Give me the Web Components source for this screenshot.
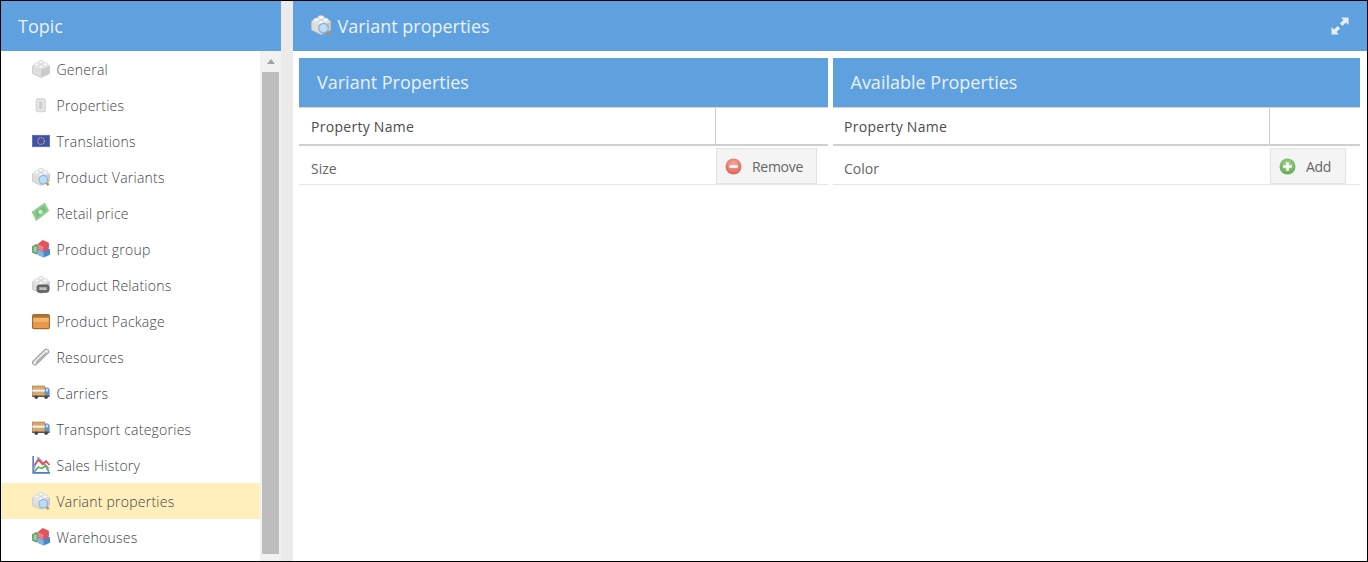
<!DOCTYPE html>
<html>
<head>
<meta charset="utf-8">
<title>Variant properties</title>
<style>
html, body { margin: 0; padding: 0; height: 562px; overflow: hidden; }
body { background: #000; font-family: "Open Sans", "Liberation Sans", sans-serif; color: #555; }
</style>
</head>
<body>

<admin-page>
    <topic-panel slot="side" heading="Topic">
        <topic-item icon="brick">General</topic-item>
        <topic-item icon="can">Properties</topic-item>
        <topic-item icon="flag">Translations</topic-item>
        <topic-item icon="brickfind">Product Variants</topic-item>
        <topic-item icon="money">Retail price</topic-item>
        <topic-item icon="group">Product group</topic-item>
        <topic-item icon="bricklink">Product Relations</topic-item>
        <topic-item icon="box">Product Package</topic-item>
        <topic-item icon="clip">Resources</topic-item>
        <topic-item icon="truck">Carriers</topic-item>
        <topic-item icon="truck">Transport categories</topic-item>
        <topic-item icon="chart">Sales History</topic-item>
        <topic-item icon="brickfind" active>Variant properties</topic-item>
        <topic-item icon="group">Warehouses</topic-item>
    </topic-panel>

    <main-panel slot="main" heading="Variant properties" icon="brickfind">
        <prop-table heading="Variant Properties" class="left">
            <prop-row name="Size" action="Remove"></prop-row>
        </prop-table>
        <prop-table heading="Available Properties" class="right">
            <prop-row name="Color" action="Add" class="right"></prop-row>
        </prop-table>
    </main-panel>
</admin-page>

<script>
// all the little icons, coloured like the old silk set (16 unit box)
const ICONS = {
    brick: `<path d="M.5 5 8 2l7.500 3v7L8 15.500.5 12z" fill="#dedede" stroke="#c4c4c4" stroke-width=".7"/>
        <path d="M8 8.500v7l7.500-3.500V5z" fill="#cbcbcb"/>
        <path d="M.5 5 8 2l7.500 3L8 8.500z" fill="#efefef"/>
        <ellipse cx="4.500" cy="4" rx="2.500" ry="1.600" fill="#f8f8f8" stroke="#c8c8c8" stroke-width=".6"/>
        <ellipse cx="11.500" cy="4" rx="2.500" ry="1.600" fill="#f8f8f8" stroke="#c8c8c8" stroke-width=".6"/>
        <ellipse cx="8" cy="2" rx="2.500" ry="1.600" fill="#f8f8f8" stroke="#c8c8c8" stroke-width=".6"/>
        <ellipse cx="8" cy="6" rx="2.500" ry="1.600" fill="#f8f8f8" stroke="#c8c8c8" stroke-width=".6"/>`,
    can: `<rect x="3.800" y="2.500" width="8" height="11.500" rx="2" fill="#e6e6e6" stroke="#d4d4d4"/><rect x="6.300" y="5" width="3" height="6.500" fill="#cfcfcf"/>`,
    flag: `<rect x=".3" y="2.900" width="15.400" height="10.200" fill="#3f51a8" stroke="#5a6ab0" stroke-width=".6"/>
        <circle cx="8" cy="8" r="3" fill="none" stroke="#c2b268" stroke-width="1.100" stroke-dasharray="1 .7"/>`,
    money: `<path d="M0 7 11.300-.8 15 6 3.800 14.800z" fill="#93d193" stroke="#7cbd80" stroke-width=".5"/>
        <path d="M2.300 7.300 10.700 1.600 12.800 5.700 4.300 12.300z" fill="#79c080"/><circle cx="7.500" cy="7" r="1.900" fill="#cdefcd"/>`,
    group: `<path d="M0 5.500 3.500 3.500 7 5v6.500l-3.500 1.300L0 11z" fill="#63a86b"/><path d="M1.500 6.500 4 5.500v5.500l-2.500-1z" fill="#a3d0a5"/>
        <path d="M5 8.500 10.500 6 16 8.500v4.500l-5.500 2.500L5 13z" fill="#4d86c4"/><path d="M5 8.500l5.500 2.500v4.500L5 13z" fill="#86b3e2"/>
        <path d="M5 3.500 9.500 0 15 2.500v5L10 10.500 5 8z" fill="#e2535b"/><path d="M5 3.500 10 5.800v4.700L5 8z" fill="#ef7f85"/>`,
    box: `<rect x=".5" y="2.300" width="15" height="12.500" rx="1.200" fill="#e89a4c" stroke="#a26b32"/>
        <rect x="1" y="2.600" width="14" height="2.400" fill="#a9713a"/><rect x="1.200" y="5.300" width="13.600" height="3.500" fill="#f3b46c"/>`,
    clip: `<path d="M2.500 13 12.800 3" stroke="#a2a2a2" stroke-width="5" stroke-linecap="round"/>
        <path d="M2.500 13 12.800 3" stroke="#ececec" stroke-width="3" stroke-linecap="round"/>
        <path d="M4 12.600 12.500 4.300" stroke="#a2a2a2" stroke-width="1" stroke-linecap="round"/>`,
    truck: `<rect x=".3" y="1.800" width="11" height="9" fill="#dca869" stroke="#a87b43" stroke-width=".6"/>
        <rect x=".3" y="5" width="11" height="1.800" fill="#eef2f7"/>
        <path d="M11.600 3.200h2.800l1.300 2v5.500h-4.100z" fill="#5d93d3"/><rect x="12.500" y="4.200" width="1.800" height="2.400" fill="#cfe2f7"/>
        <rect x=".3" y="10.300" width="15.400" height="1.300" fill="#555"/><circle cx="3.800" cy="11.800" r="1.500" fill="#444"/><circle cx="12.500" cy="11.800" r="1.500" fill="#444"/>`,
    chart: `<path d="M1 0v15h15" fill="none" stroke="#4c7fbe" stroke-width="1.400"/>
        <path d="M1.500 12 5.500 1.500 15 11" fill="none" stroke="#8ea2dc" stroke-width="1.300"/>
        <path d="M2 8 6 3.500 9.500 7.500l3-3 3 3.500" fill="none" stroke="#e2535b" stroke-width="1.600"/>
        <path d="M2 14 5.500 10 9 11 12 8.500l3 5.500" fill="none" stroke="#62ad62" stroke-width="1.600"/>`,
    lens: `<circle cx="10" cy="10.500" r="3.800" fill="#bcdcf6" stroke="#86aed2" stroke-width=".9"/><path d="M13 13.500 14.800 15.200" stroke="#c98a43" stroke-width="2.200"/>`,
    link: `<rect x="4.500" y="8" width="10.500" height="6.500" rx="2" fill="#6a6a6a" stroke="#4a4a4a" stroke-width=".7"/><rect x="6.500" y="10" width="6.500" height="2.500" fill="#bdbdbd"/>`
};
ICONS.brickfind = ICONS.brick + ICONS.lens;
ICONS.bricklink = ICONS.brick + ICONS.link;

class UiIcon extends HTMLElement
{
    connectedCallback()
    {
        let size = this.getAttribute('size') || 18;
        let shadow = this.attachShadow({mode: 'open'});
        shadow.innerHTML = `
            <style>
                :host { display: inline-flex; flex: none; width: ${size}px; height: ${size}px; }
                svg { width: 100%; height: 100%; display: block; overflow: visible; }
            </style>
            <svg viewBox="0 0 16 16">${ICONS[this.getAttribute('name')] || ''}</svg>`;
    }
}
customElements.define('ui-icon', UiIcon);


class AdminPage extends HTMLElement
{
    constructor()
    {
        super();
        this.attachShadow({mode: 'open'}).innerHTML = `
            <style>
                :host { display: flex; box-sizing: border-box; height: 562px; padding: 1px; background: #000; }
                .wrap { display: flex; flex: 1; min-width: 0; background: #ebebeb; }
                .side { display: flex; width: 280px; flex: none; }
                .main { display: flex; flex: 1; min-width: 0; margin-left: 12px; }
            </style>
            <div class="wrap">
                <div class="side"><slot name="side"></slot></div>
                <div class="main"><slot name="main"></slot></div>
            </div>`;
    }
}
customElements.define('admin-page', AdminPage);


class TopicPanel extends HTMLElement
{
    constructor()
    {
        super();
        this.attachShadow({mode: 'open'}).innerHTML = `
            <style>
                :host { display: flex; flex-direction: column; flex: 1; background: #fff; overflow: hidden; }
                header { height: 50px; flex: none; background: #5fa0de; color: #e9f2fb; font-size: 18px;
                    line-height: 50px; padding-left: 17px; }
                .body { display: flex; flex: 1; min-height: 0; }
                .list { flex: 1; min-width: 0; overflow: hidden; }
                .track { width: 21px; flex: none; background: #f1f1f1; padding: 0 2px 7px; box-sizing: border-box;
                    display: flex; flex-direction: column; }
                .arrow { height: 21px; flex: none; display: flex; justify-content: center; align-items: center; }
                .arrow i { width: 0; height: 0; border: 4.5px solid transparent; border-top: 0; border-bottom: 5px solid #a3a3a3; }
                .thumb { flex: 1; background: #bdbdbd; }
            </style>
            <header></header>
            <div class="body">
                <div class="list"><slot></slot></div>
                <div class="track"><div class="arrow"><i></i></div><div class="thumb"></div></div>
            </div>`;
        this.shadowRoot.querySelector('header').textContent = this.getAttribute('heading');
    }
}
customElements.define('topic-panel', TopicPanel);


class TopicItem extends HTMLElement
{
    connectedCallback()
    {
        let shadow = this.attachShadow({mode: 'open'});
        shadow.innerHTML = `
            <style>
                :host { display: flex; align-items: center; height: 36px; padding-left: 31px; font-size: 14px;
                    font-weight: 300; color: #444; letter-spacing: .24px; }
                :host([active]) { background: #ffefbb; }
                ui-icon { margin-right: 6.5px; }
            </style>
            <ui-icon name="${this.getAttribute('icon')}"></ui-icon><slot></slot>`;
    }
}
customElements.define('topic-item', TopicItem);


class MainPanel extends HTMLElement
{
    connectedCallback()
    {
        let shadow = this.attachShadow({mode: 'open'});
        shadow.innerHTML = `
            <style>
                :host { display: flex; flex-direction: column; flex: 1; min-width: 0; background: #fff; }
                header { height: 50px; flex: none; background: #5fa0de; color: #e9f2fb; font-size: 18px;
                    display: flex; align-items: center; padding: 0 18px; }
                header span { flex: 1; margin: -1px 0 0 6.5px; }
                header ui-icon { margin-top: -2px; }
                svg { width: 18px; height: 18px; display: block; }
                .body { display: grid; grid-template-columns: 529px 527px; column-gap: 5px; padding: 7px 0 0 6px; }
            </style>
            <header>
                <ui-icon name="${this.getAttribute('icon')}" size="20"></ui-icon>
                <span>${this.getAttribute('heading')}</span>
                <svg viewBox="0 0 18 18"><path d="M10 .5h7.500V8l-2.500-2.500-3.600 3.600-2.500-2.500 3.600-3.600zM8 17.500H.5V10L3 12.500l3.600-3.600 2.500 2.500-3.600 3.600z" fill="#e4eff9"/></svg>
            </header>
            <div class="body"><slot></slot></div>`;
    }
}
customElements.define('main-panel', MainPanel);


class PropTable extends HTMLElement
{
    connectedCallback()
    {
        let left = this.classList.contains('left');
        let shadow = this.attachShadow({mode: 'open'});
        shadow.innerHTML = `
            <style>
                :host { display: block; }
                h2 { margin: 0; height: 49px; background: #5fa0de; color: #e9f2fb; font-size: 18px; font-weight: 400;
                    line-height: 48px; padding-left: ${left ? 18 : 17.5}px; }
                .head { display: flex; height: 36px; border-top: 1px solid #d6d6d6; border-bottom: 2px solid #cfcfcf;
                    font-size: 14px; color: #4c4c4c; letter-spacing: .28px; }
                .head div:first-child { flex: 1; padding: 9px 0 0 ${left ? 12 : 11}px; }
                .head div:last-child { width: ${left ? 113 : 91}px; flex: none; border-left: 1px solid #cfcfcf; box-sizing: border-box; }
            </style>
            <h2>${this.getAttribute('heading')}</h2>
            <div class="head"><div>Property Name</div><div></div></div>
            <slot></slot>`;
    }
}
customElements.define('prop-table', PropTable);


class PropRow extends HTMLElement
{
    connectedCallback()
    {
        let remove = this.getAttribute('action') == 'Remove';
        let shadow = this.attachShadow({mode: 'open'});
        shadow.innerHTML = `
            <style>
                :host { display: flex; height: 39px; box-sizing: border-box; border-bottom: 1px solid #e6e6e6;
                    font-size: 14px; color: #666; }
                .name { flex: 1; padding: 13px 0 0 ${remove ? 12 : 11}px; }
                button { font: inherit; color: #666; margin: 2px ${remove ? 11 : 14}px 0 0; height: 36px; box-sizing: border-box;
                    width: ${remove ? 101 : 76}px; background: #f4f4f4; border: 1px solid #e2e2e2;
                    letter-spacing: -.3px; display: flex; align-items: center; padding: 0 0 0 8px; }
                svg { width: 17px; height: 17px; flex: none; margin-right: 10px; }
            </style>
            <div class="name">${this.getAttribute('name')}</div>
            <button>
                <svg viewBox="0 0 16 16">
                    <defs><radialGradient id="g" cx=".5" cy=".35" r=".7">
                        <stop offset="0" stop-color="${remove ? '#f6a79f' : '#a8d98f'}"/>
                        <stop offset="1" stop-color="${remove ? '#dd5e54' : '#5ea552'}"/>
                    </radialGradient></defs>
                    <circle cx="8" cy="8" r="7.500" fill="url(#g)"/>
                    ${remove ? '<rect x="4" y="6.800" width="8" height="2.400" fill="#fff"/>'
                             : '<path d="M6.800 4h2.400v2.800H12v2.400H9.200V12H6.800V9.200H4V6.800h2.800z" fill="#fff"/>'}
                </svg>
                ${this.getAttribute('action')}
            </button>`;
    }
}
customElements.define('prop-row', PropRow);
</script>
</body>
</html>
